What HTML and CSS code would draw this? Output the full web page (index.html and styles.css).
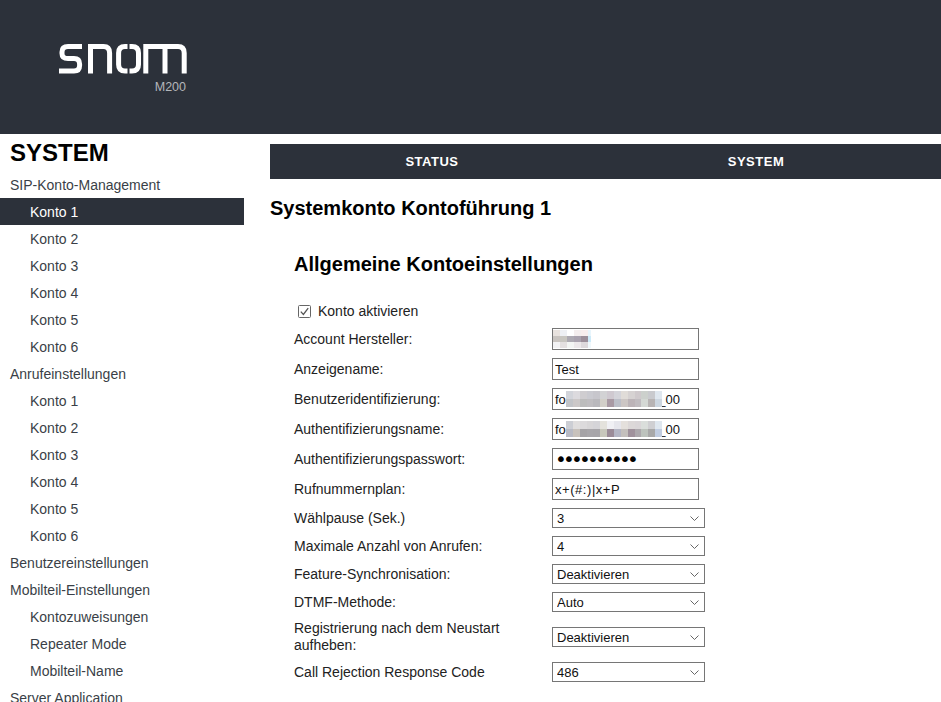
FILE: index.html
```html
<!DOCTYPE html>
<html lang="de">
<head>
<meta charset="utf-8">
<title>snom M200</title>
<link rel="stylesheet" href="styles.css">
</head>
<body>
<header class="top">
  <div class="brand">
    <svg class="logo" width="128" height="30" viewBox="59 44 128 30" fill="none" stroke="#fff" stroke-width="5">
      <path d="M82 46.6H68Q62 46.6 62 52V53.5Q62 58.6 68 58.6H74Q79.6 58.6 79.6 64V65.5Q79.6 71 74 71H59"/>
      <path d="M90.5 73.5V46.6H103.5Q109.6 46.6 109.6 53V73.5"/>
      <path d="M127.5 46.6H125Q118.6 46.6 118.6 53V64.5Q118.6 71 125 71H127.5M129.5 46.6H132Q138.5 46.6 138.5 53V64.5Q138.5 71 132 71H129.5"/>
      <path d="M145.8 73.5V46.6H178Q184.2 46.6 184.2 53V73.5M165 46.6V73.5"/>
    </svg>
    <div class="model">M200</div>
  </div>
</header>
<div class="layout">
  <nav class="side">
    <h2 class="side-title">SYSTEM</h2>
    <a class="nav">SIP-Konto-Management</a>
    <a class="nav sub active">Konto 1</a>
    <a class="nav sub">Konto 2</a>
    <a class="nav sub">Konto 3</a>
    <a class="nav sub">Konto 4</a>
    <a class="nav sub">Konto 5</a>
    <a class="nav sub">Konto 6</a>
    <a class="nav">Anrufeinstellungen</a>
    <a class="nav sub">Konto 1</a>
    <a class="nav sub">Konto 2</a>
    <a class="nav sub">Konto 3</a>
    <a class="nav sub">Konto 4</a>
    <a class="nav sub">Konto 5</a>
    <a class="nav sub">Konto 6</a>
    <a class="nav">Benutzereinstellungen</a>
    <a class="nav">Mobilteil-Einstellungen</a>
    <a class="nav sub">Kontozuweisungen</a>
    <a class="nav sub">Repeater Mode</a>
    <a class="nav sub">Mobilteil-Name</a>
    <a class="nav">Server Application</a>
  </nav>
  <main class="main">
    <div class="tabs">
      <a class="tab">STATUS</a>
      <a class="tab">SYSTEM</a>
    </div>
    <h1 class="title">Systemkonto Kontoführung 1</h1>
    <section class="form">
      <h2 class="form-title">Allgemeine Kontoeinstellungen</h2>
      <label class="check">
        <svg width="13" height="13" viewBox="0 0 13 13" fill="none"><rect x=".5" y=".5" width="12" height="12" rx="1" stroke="#666"/><path d="M2.8 6.6 5.4 9.4 10.2 3.2" stroke="#555" stroke-width="1.3"/></svg>
        Konto aktivieren
      </label>
      <div class="row tall"><span class="lbl">Account Hersteller:</span>
        <div class="field">
          <svg class="blur-name" width="38" height="18" viewBox="0 0 38 18" shape-rendering="crispEdges">
            <rect x="0" y="0" width="7" height="6" fill="#e8e2de"/><rect x="7" y="0" width="7" height="6" fill="#eef0f4"/><rect x="21" y="0" width="7" height="6" fill="#f4eeee"/><rect x="28" y="0" width="7" height="6" fill="#f8eeee"/><rect x="35" y="0" width="3" height="6" fill="#e8f5fc"/>
            <rect x="0" y="6" width="7" height="6" fill="#c9c4c0"/><rect x="7" y="6" width="7" height="6" fill="#c8c6c0"/><rect x="14" y="6" width="7" height="6" fill="#adaab2"/><rect x="21" y="6" width="7" height="6" fill="#a9a2ae"/><rect x="28" y="6" width="7" height="6" fill="#9c8f9a"/><rect x="35" y="6" width="3" height="6" fill="#cdeaf8"/>
            <rect x="0" y="12" width="7" height="6" fill="#f2f2f4"/><rect x="7" y="12" width="7" height="6" fill="#e4e0e0"/><rect x="14" y="12" width="7" height="6" fill="#f3f5f3"/><rect x="21" y="12" width="7" height="6" fill="#ece8ea"/><rect x="28" y="12" width="7" height="6" fill="#ddd9dc"/><rect x="35" y="12" width="3" height="6" fill="#f0f8fc"/>
          </svg>
        </div></div>
      <div class="row tall"><span class="lbl">Anzeigename:</span><input class="field" type="text" value="Test"></div>
      <div class="row tall"><span class="lbl">Benutzeridentifizierung:</span>
        <div class="field">fo<svg class="blur" width="96" height="16" viewBox="0 0 14 2" preserveAspectRatio="none" shape-rendering="crispEdges">
            <rect x="0" width="1" height="1" fill="#d2d4da"/><rect x="1" width="1" height="1" fill="#dcdade"/><rect x="2" width="1" height="1" fill="#cfcdd0"/><rect x="3" width="1" height="1" fill="#cacad0"/><rect x="4" width="1" height="1" fill="#c7c6cc"/><rect x="5" width="1" height="1" fill="#d2d2d4"/><rect x="6" width="1" height="1" fill="#cfc9d0"/><rect x="7" width="1" height="1" fill="#d4d4da"/><rect x="8" width="1" height="1" fill="#e0dcd8"/><rect x="9" width="1" height="1" fill="#d6d2d2"/><rect x="10" width="1" height="1" fill="#cfc9cc"/><rect x="11" width="1" height="1" fill="#ccd0cc"/><rect x="12" width="1" height="1" fill="#c9cace"/><rect x="13" width="1" height="1" fill="#dfe7ef"/>
            <rect x="0" y="1" width="1" height="1" fill="#c2c4c8"/><rect x="1" y="1" width="1" height="1" fill="#ccc8c8"/><rect x="2" y="1" width="1" height="1" fill="#bcbcbc"/><rect x="3" y="1" width="1" height="1" fill="#bfbdc0"/><rect x="4" y="1" width="1" height="1" fill="#b9b8bc"/><rect x="5" y="1" width="1" height="1" fill="#d2cfc8"/><rect x="6" y="1" width="1" height="1" fill="#a99aa4"/><rect x="7" y="1" width="1" height="1" fill="#bcbfc8"/><rect x="8" y="1" width="1" height="1" fill="#ccc6c4"/><rect x="9" y="1" width="1" height="1" fill="#bcb4b8"/><rect x="10" y="1" width="1" height="1" fill="#c0bcc0"/><rect x="11" y="1" width="1" height="1" fill="#d4d8d4"/><rect x="12" y="1" width="1" height="1" fill="#b8b4b4"/><rect x="13" y="1" width="1" height="1" fill="#ccd6e0"/>
          </svg><span class="tail">_00</span></div></div>
      <div class="row tall"><span class="lbl">Authentifizierungsname:</span>
        <div class="field">fo<svg class="blur" width="96" height="16" viewBox="0 0 14 2" preserveAspectRatio="none" shape-rendering="crispEdges">
            <rect x="0" width="1" height="1" fill="#ccced4"/><rect x="1" width="1" height="1" fill="#e0dede"/><rect x="2" width="1" height="1" fill="#dcdadc"/><rect x="3" width="1" height="1" fill="#d8d6d8"/><rect x="4" width="1" height="1" fill="#d5d4d8"/><rect x="5" width="1" height="1" fill="#e4e2dc"/><rect x="6" width="1" height="1" fill="#f0f0f4"/><rect x="7" width="1" height="1" fill="#e6e6ec"/><rect x="8" width="1" height="1" fill="#e4e0dc"/><rect x="9" width="1" height="1" fill="#dcd8d8"/><rect x="10" width="1" height="1" fill="#dad6d8"/><rect x="11" width="1" height="1" fill="#dadedb"/><rect x="12" width="1" height="1" fill="#cfcfd2"/><rect x="13" width="1" height="1" fill="#dfe7ef"/>
            <rect x="0" y="1" width="1" height="1" fill="#b8bac4"/><rect x="1" y="1" width="1" height="1" fill="#c8c2bc"/><rect x="2" y="1" width="1" height="1" fill="#a5a3a6"/><rect x="3" y="1" width="1" height="1" fill="#a8a6aa"/><rect x="4" y="1" width="1" height="1" fill="#a7a5a9"/><rect x="5" y="1" width="1" height="1" fill="#c8c8bc"/><rect x="6" y="1" width="1" height="1" fill="#9b8c98"/><rect x="7" y="1" width="1" height="1" fill="#b4b6c4"/><rect x="8" y="1" width="1" height="1" fill="#c4c0bc"/><rect x="9" y="1" width="1" height="1" fill="#a0929c"/><rect x="10" y="1" width="1" height="1" fill="#aca8ac"/><rect x="11" y="1" width="1" height="1" fill="#bcc2bc"/><rect x="12" y="1" width="1" height="1" fill="#a8a8a8"/><rect x="13" y="1" width="1" height="1" fill="#c0cce0"/>
          </svg><span class="tail">_00</span></div></div>
      <div class="row tall"><span class="lbl">Authentifizierungspasswort:</span><input class="field secret" type="password" value="1234567890"></div>
      <div class="row tall"><span class="lbl">Rufnummernplan:</span><input class="field spaced" type="text" value="x+(#:)|x+P"></div>
      <div class="row"><span class="lbl">Wählpause (Sek.)</span><select class="pick"><option>3</option></select></div>
      <div class="row"><span class="lbl">Maximale Anzahl von Anrufen:</span><select class="pick"><option>4</option></select></div>
      <div class="row"><span class="lbl">Feature-Synchronisation:</span><select class="pick"><option>Deaktivieren</option></select></div>
      <div class="row"><span class="lbl">DTMF-Methode:</span><select class="pick"><option>Auto</option></select></div>
      <div class="row double"><span class="lbl">Registrierung nach dem Neustart aufheben:</span><select class="pick"><option>Deaktivieren</option></select></div>
      <div class="row"><span class="lbl">Call Rejection Response Code</span><select class="pick"><option>486</option></select></div>
    </section>
  </main>
</div>
</body>
</html>
```
FILE: styles.css
```css
* { box-sizing: border-box; }
html, body { margin: 0; height: 702px; overflow: hidden; background: #fff; }
body { font-family: "Liberation Sans", Arial, sans-serif; font-size: 14px; color: #222; }

.top { height: 134px; background: #2c313a; padding: 44px 0 0 59px; }
.brand { width: 127px; }
.logo { display: block; }
.model { margin-top: 6px; text-align: right; font-size: 12.5px; line-height: 14px; color: #b4b6ba; }

.layout { display: flex; align-items: flex-start; }
.side { width: 244px; flex: none; }
.side-title { margin: 0; height: 37px; padding: 5px 0 0 10px; font-size: 24px; line-height: 28px; font-weight: bold; color: #000; }
.nav { display: block; height: 27px; line-height: 29px; padding-left: 10px; color: #3a3f47; }
.nav.sub { padding-left: 30px; }
.nav.active { background: #2c313a; color: #fff; }

.main { flex: 1; margin-left: 26px; padding-top: 10px; }
.tabs { display: flex; height: 35px; background: #2c313a; }
.tab { width: 324px; text-align: center; line-height: 36px; font-size: 13px; font-weight: bold; letter-spacing: .5px; color: #fff; }
.title { margin: 17px 0 0; font-size: 20px; line-height: 24px; font-weight: bold; color: #000; }
.form { padding: 32px 0 0 24px; }
.form-title { margin: 0; font-size: 20px; line-height: 24px; font-weight: bold; color: #000; }
.check { display: flex; align-items: center; gap: 7px; height: 20px; margin-top: 25px; padding-left: 4px; }
.row { display: flex; align-items: center; height: 28px; }
.row.tall { height: 30px; }
.row.double { height: 42px; }
.check + .row { margin-top: 3px; }
.lbl { width: 258px; flex: none; padding-right: 8px; line-height: 17px; color: #222; }
.field { display: flex; align-items: center; width: 147px; height: 22px; margin: 0; padding: 0 2px; border: 1px solid #767676; border-radius: 0; background: #fff; font: 13px "Liberation Sans", Arial, sans-serif; color: #111; outline: none; }
.field.spaced { letter-spacing: .55px; }
.field.secret { font: 20px "DejaVu Sans", sans-serif; letter-spacing: -3.8px; color: #000; }
.blur { flex: none; margin-right: -3.5px; position: relative; }
.blur-name { flex: none; margin-left: -2px; }
.tail { flex: none; }
.pick { appearance: none; -webkit-appearance: none; width: 153px; height: 20px; margin: 0; padding: 0 0 0 4px; border: 1px solid #767676; border-radius: 0; font: 13px "Liberation Sans", Arial, sans-serif; color: #111; background: #fff url("data:image/svg+xml,%3Csvg xmlns='http://www.w3.org/2000/svg' width='9' height='5' fill='none'%3E%3Cpath d='M.5.5 4.5 4.5 8.5.5' stroke='%23666'/%3E%3C/svg%3E") no-repeat right 5px center; }
```
